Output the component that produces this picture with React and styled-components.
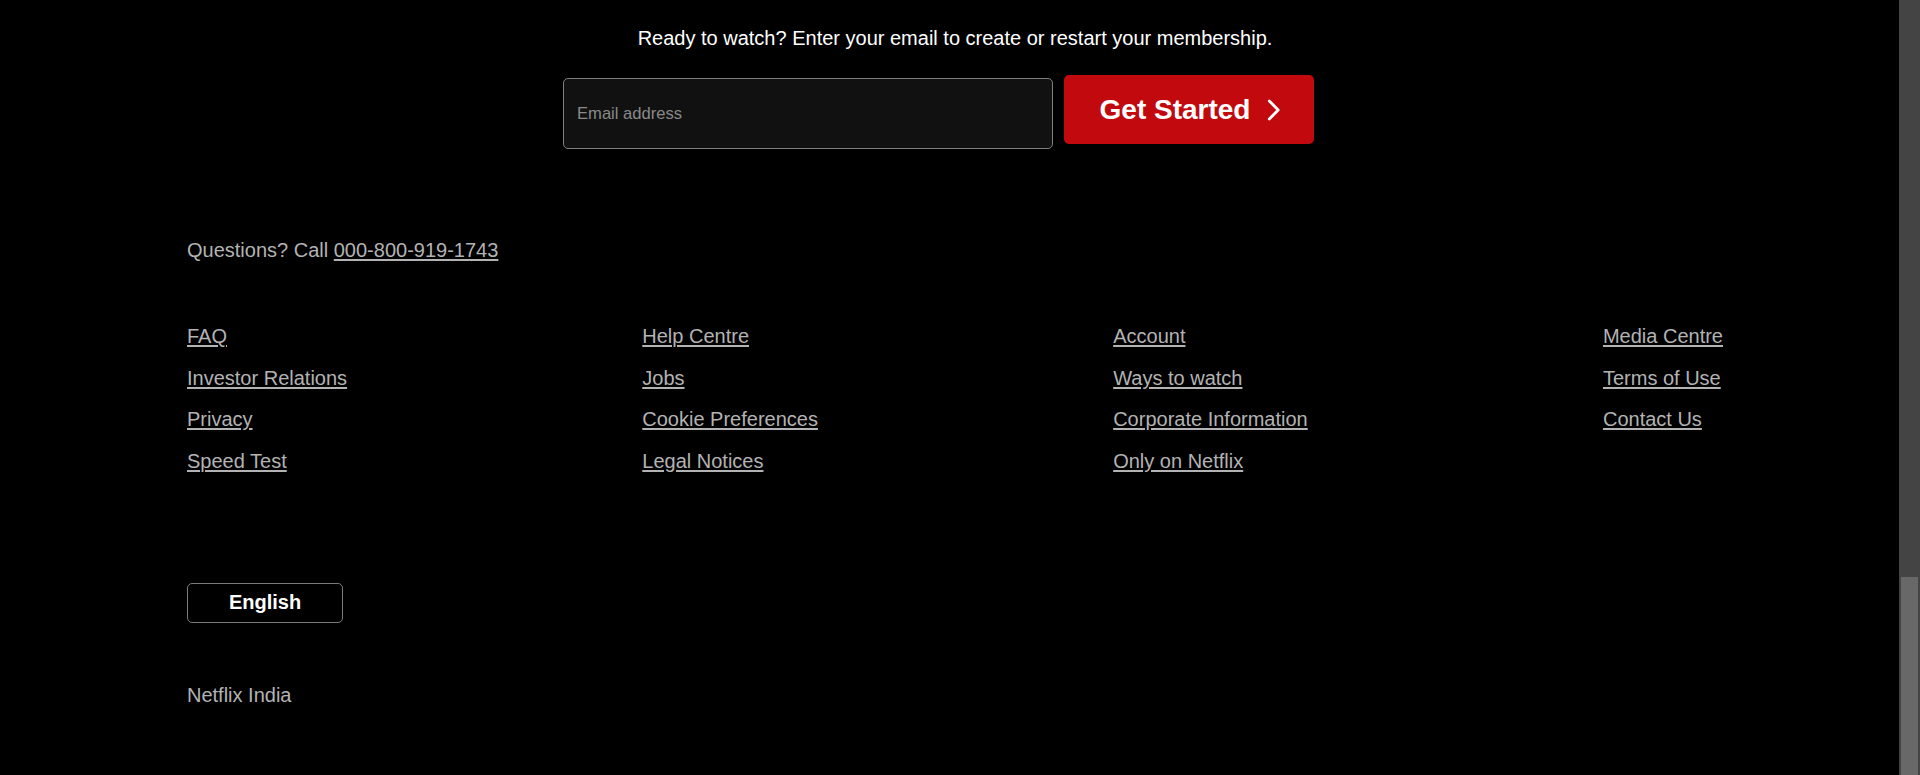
import React from 'react';
import styled, { createGlobalStyle } from 'styled-components';

const GlobalStyle = createGlobalStyle`
  html, body {
    margin: 0;
    padding: 0;
    background: #000;
    overflow: hidden;
  }
  body {
    font-family: "Liberation Sans", Arial, Helvetica, sans-serif;
    color: #fff;
  }
`;

const columns = [
  ['FAQ', 'Investor Relations', 'Privacy', 'Speed Test'],
  ['Help Centre', 'Jobs', 'Cookie Preferences', 'Legal Notices'],
  ['Account', 'Ways to watch', 'Corporate Information', 'Only on Netflix'],
  ['Media Centre', 'Terms of Use', 'Contact Us'],
];

const ChevronIcon = () => (
  <svg width="26" height="26" viewBox="0 0 24 24" fill="none" aria-hidden="true">
    <path
      d="M8.6 3.8 16.8 12l-8.2 8.2"
      stroke="currentColor"
      strokeWidth="2.6"
      strokeLinecap="round"
      strokeLinejoin="round"
    />
  </svg>
);

const App = () => {
  return (
    <>
      <GlobalStyle />
      <Page>
        <Cta>
          <CtaText>Ready to watch? Enter your email to create or restart your membership.</CtaText>
          <Form onSubmit={(e) => e.preventDefault()}>
            <EmailField type="email" placeholder="Email address" />
            <StartButton type="submit">
              Get Started
              <ChevronIcon />
            </StartButton>
          </Form>
        </Cta>

        <Footer>
          <Questions>
            Questions? Call <FooterLink href="#">000-800-919-1743</FooterLink>
          </Questions>

          <LinkGrid>
            {columns.map((col, i) => (
              <LinkColumn key={i}>
                {col.map((label) => (
                  <li key={label}>
                    <FooterLink href="#">{label}</FooterLink>
                  </li>
                ))}
              </LinkColumn>
            ))}
          </LinkGrid>

          <LangButton type="button">English</LangButton>
          <Country>Netflix India</Country>
        </Footer>
      </Page>

      {/* decorative scrollbar, page is scrolled to the bottom */}
      <ScrollTrack>
        <ScrollThumb />
      </ScrollTrack>
    </>
  );
};

const Page = styled.div`
  width: 1899px;
  min-height: 775px;
  box-sizing: border-box;
  padding-top: 23px;
`;

const Cta = styled.section`
  display: flex;
  flex-direction: column;
  align-items: center;
`;

const CtaText = styled.h3`
  margin: 0;
  font-size: 20px;
  font-weight: 400;
  line-height: 30px;
  color: #fff;
  padding-left: 11px;
`;

const Form = styled.form`
  display: flex;
  align-items: flex-start;
  gap: 11px;
  margin-top: 22px;
  margin-right: 22px;
`;

const EmailField = styled.input`
  width: 490px;
  height: 71px;
  box-sizing: border-box;
  margin-top: 3px;
  padding: 0 13px;
  background: #111;
  border: 1px solid #7f7f7f;
  border-radius: 5px;
  color: #fff;
  font-family: inherit;
  font-size: 16.6px;
  outline: none;

  &::placeholder {
    color: #8a8a8a;
  }
`;

const StartButton = styled.button`
  width: 250px;
  height: 69px;
  display: flex;
  align-items: center;
  justify-content: center;
  gap: 10px;
  padding: 0 0 0 8px;
  background: #c1090e;
  color: #fff;
  border: none;
  border-radius: 5px;
  font-family: inherit;
  font-size: 28px;
  font-weight: 700;
  cursor: pointer;
`;

const Footer = styled.footer`
  padding: 86px 176px 40px 187px;
  color: #b3b3b3;
  font-size: 20px;
`;

const Questions = styled.p`
  margin: 0;
  line-height: 30px;
  color: #b3b3b3;
`;

const FooterLink = styled.a`
  color: #b3b3b3;
  text-decoration: underline;
  text-underline-offset: 2px;
`;

const LinkGrid = styled.div`
  display: flex;
  justify-content: space-between;
  margin-top: 59px;
`;

const LinkColumn = styled.ul`
  list-style: none;
  margin: 0;
  padding: 0;
  display: flex;
  flex-direction: column;
  gap: 17.5px;

  li {
    line-height: 24px;
  }
`;

const LangButton = styled.button`
  display: block;
  margin-top: 110px;
  width: 156px;
  height: 40px;
  background: transparent;
  border: 1px solid #7a7a7a;
  border-radius: 5px;
  color: #fff;
  font-family: inherit;
  font-size: 20px;
  font-weight: 700;
`;

const Country = styled.p`
  margin: 60px 0 0;
  line-height: 24px;
  color: #b3b3b3;
`;

const ScrollTrack = styled.div`
  position: fixed;
  top: 0;
  right: 0;
  bottom: 0;
  width: 21px;
  background: #444;
`;

const ScrollThumb = styled.div`
  position: absolute;
  left: 2px;
  right: 2px;
  top: 577px;
  bottom: 0;
  background: #686868;
`;

export default App;
